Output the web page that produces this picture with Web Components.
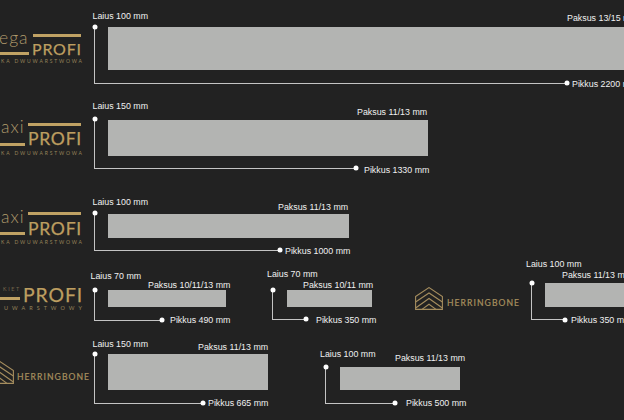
<!DOCTYPE html>
<html lang="pl"><head><meta charset="utf-8"><title>Profi</title>
<style>
html,body{margin:0;padding:0;background:#222222;}
body{width:624px;height:420px;overflow:hidden;}
</style></head><body>
<plank-canvas>
<profi-logo word="ega" sub="KA DWUWARSTWOWA" top="26" wordx="-1" wordy="3" wordsize="17.5" barx="33" barw="48" bary="7.5" bar2w="29" bar2y="25.5" px="32" py="15" psize="16" ls=".8" suby="33"></profi-logo>
<profi-logo word="axi" sub="KA DWUWARSTWOWA" top="116" wordx="1" wordy="1.5" wordsize="17.5" barx="28" barw="53" bary="7" bar2w="25" bar2y="27" px="28" py="14" psize="17.6" ls=".7" suby="34.5"></profi-logo>
<profi-logo word="axi" sub="KA DWUWARSTWOWA" top="206" wordx="1" wordy="1.5" wordsize="17.5" barx="28" barw="53" bary="6" bar2w="25" bar2y="25.5" px="28" py="14" psize="17.6" ls=".7" suby="33.5"></profi-logo>
<profi-logo word="KIET" sub="UWARSTWOWY" top="280" wordx="3" wordy="6" wordsize="5.6" wordls="1.6" barx="0" barw="0" bary="0" bar2w="20" bar2y="17" px="23" py="5" psize="19.4" ls=".9" suby="26" subsize="5.5" subls="4"></profi-logo>
<herring-logo x="415" y="287" size="28" tx="447" ty="297" tsize="8.6"></herring-logo>
<herring-logo x="-14" y="361" size="28" tx="17" ty="371" tsize="8.6"></herring-logo>

<plank-dim rx="108" ry="27" rw="516" rh="43" dx="95" dy="27" ly="83" ex="567" lx="92.5" lt="16" l="Laius 100 mm" px="567" pt="18" p="Paksus 13/15 mm" kx="572" kt="84" k="Pikkus 2200 mm"></plank-dim>
<plank-dim rx="108" ry="119.5" rw="320" rh="36" dx="95" dy="119" ly="168" ex="356" lx="92.5" lt="106" l="Laius 150 mm" px="357" pt="112" p="Paksus 11/13 mm" kx="364" kt="170" k="Pikkus 1330 mm"></plank-dim>
<plank-dim rx="108" ry="214" rw="241" rh="24" dx="95" dy="213" ly="250" ex="280" lx="92.5" lt="202" l="Laius 100 mm" px="278" pt="207" p="Paksus 11/13 mm" kx="285" kt="251" k="Pikkus 1000 mm"></plank-dim>
<plank-dim rx="108" ry="290" rw="118" rh="17" dx="95" dy="290" ly="320" ex="162" lx="90.5" lt="276" l="Laius 70 mm" px="148" pt="285" p="Paksus 10/11/13 mm" kx="170" kt="320" k="Pikkus 490 mm"></plank-dim>
<plank-dim rx="287" ry="290" rw="85" rh="17" dx="273" dy="290" ly="319" ex="306" lx="267" lt="274" l="Laius 70 mm" px="303" pt="285" p="Paksus 10/11 mm" kx="316" kt="320" k="Pikkus 350 mm"></plank-dim>
<plank-dim rx="545" ry="283" rw="79" rh="24" dx="532" dy="283" ly="319.5" ex="565" lx="526" lt="264" l="Laius 100 mm" px="562" pt="275" p="Paksus 11/13 mm" kx="571" kt="320" k="Pikkus 350 mm"></plank-dim>
<plank-dim rx="108" ry="354" rw="160" rh="36" dx="95" dy="354" ly="403" ex="203" lx="92.5" lt="344" l="Laius 150 mm" px="198" pt="347" p="Paksus 11/13 mm" kx="208" kt="403" k="Pikkus 665 mm"></plank-dim>
<plank-dim rx="340" ry="367" rw="120" rh="23" dx="326" dy="367" ly="403" ex="395" lx="320" lt="354" l="Laius 100 mm" px="395" pt="358" p="Paksus 11/13 mm" kx="406" kt="403" k="Pikkus 500 mm"></plank-dim>
</plank-canvas>
<script>
class PlankCanvas extends HTMLElement{
  constructor(){super();this.attachShadow({mode:'open'}).innerHTML=`<style>:host{display:block;position:relative;width:624px;height:420px;overflow:hidden;background:#222222;font-family:"Liberation Sans",Arial,sans-serif}</style><slot></slot>`;}
}
class PlankDim extends HTMLElement{
  connectedCallback(){
    const a=n=>this.getAttribute(n), f=n=>parseFloat(a(n));
    const r=this.shadowRoot||this.attachShadow({mode:'open'});
    r.innerHTML=`<style>
:host{display:block;position:absolute;inset:0;pointer-events:none}
.plank{position:absolute;background:#b3b4b2}
.t{position:absolute;color:#f0f0f0;font:8.85px/10px "Liberation Sans",Arial,sans-serif;white-space:nowrap;transform:translateY(-50%)}
.d{position:absolute;width:5px;height:5px;border-radius:50%;background:#fff;transform:translate(-50%,-50%)}
.line{position:absolute;box-sizing:border-box;border-left:1.5px solid #c4c4c4;border-bottom:1.5px solid #c4c4c4}
</style>
<div class="plank" style="left:${a('rx')}px;top:${a('ry')}px;width:${a('rw')}px;height:${a('rh')}px"></div>
<div class="line" style="left:${f('dx')-.75}px;top:${a('dy')}px;width:${f('ex')-f('dx')}px;height:${f('ly')-f('dy')+.75}px"></div>
<div class="d" style="left:${a('dx')}px;top:${a('dy')}px"></div>
<div class="d" style="left:${a('ex')}px;top:${a('ly')}px"></div>
<span class="t" style="left:${a('lx')}px;top:${a('lt')}px">${a('l')}</span>
<span class="t" style="left:${a('px')}px;top:${a('pt')}px">${a('p')}</span>
<span class="t" style="left:${a('kx')}px;top:${a('kt')}px">${a('k')}</span>`;
  }
}
class ProfiLogo extends HTMLElement{
  connectedCallback(){
    const a=n=>this.getAttribute(n);
    const r=this.shadowRoot||this.attachShadow({mode:'open'});
    const sz=a('subsize')||'5', ls=a('subls')||'1.85';
    r.innerHTML=`<style>
:host{display:block;position:absolute;left:0;top:${a('top')}px;width:90px;height:40px;color:#bd9e60;font-family:Lato,"Open Sans",sans-serif}
span,i{position:absolute;white-space:nowrap;font-style:normal}
i{background:#c0a264;height:3px}
.w{font-weight:300;line-height:1;letter-spacing:${a('wordls')||'1'}px;color:#b09a6c}
.p{font-weight:400;line-height:1;letter-spacing:${a('ls')}px;-webkit-text-stroke:.25px #bd9e60}
.s{right:${8-parseFloat(ls)}px;line-height:1;letter-spacing:${ls}px;font-weight:400;color:#98845a}
</style>
<span class="w" style="left:${a('wordx')}px;top:${a('wordy')}px;font-size:${a('wordsize')}px">${a('word')}</span>
<i style="left:${a('barx')}px;width:${a('barw')}px;top:${a('bary')}px"></i>
<i style="left:0;width:${a('bar2w')}px;top:${a('bar2y')}px"></i>
<span class="p" style="left:${a('px')}px;top:${a('py')}px;font-size:${a('psize')}px">PROFI</span>
<span class="s" style="top:${a('suby')}px;font-size:${sz}px">${a('sub')}</span>`;
  }
}
class HerringLogo extends HTMLElement{
  connectedCallback(){
    const a=n=>this.getAttribute(n);
    const r=this.shadowRoot||this.attachShadow({mode:'open'});
    r.innerHTML=`<style>
:host{display:block;position:absolute;inset:0}
svg{position:absolute;fill:none;stroke:#a58d5e;stroke-width:1.1}
span{position:absolute;color:#a8905f;font:400 ${a('tsize')}px/12px Lato,"Open Sans",sans-serif;letter-spacing:1.05px;white-space:nowrap;-webkit-text-stroke:.2px #a8905f}
</style>
<svg style="left:${a('x')}px;top:${a('y')}px" width="${a('size')}" height="${a('size')}" viewBox="0 0 28 24" preserveAspectRatio="xMinYMin">
<path d="M.6 9.5 14 .6 27.4 9.5V22.4H.6Z"/><path d="M.6 15 14 6 27.4 15"/><path d="M.6 21 14 11.5 27.4 21"/><path d="M7 22.4 14 17.2 21 22.4"/>
</svg>
<span style="left:${a('tx')}px;top:${a('ty')}px">HERRINGBONE</span>`;
  }
}
customElements.define('plank-canvas',PlankCanvas);
customElements.define('plank-dim',PlankDim);
customElements.define('profi-logo',ProfiLogo);
customElements.define('herring-logo',HerringLogo);
</script>
</body></html>
